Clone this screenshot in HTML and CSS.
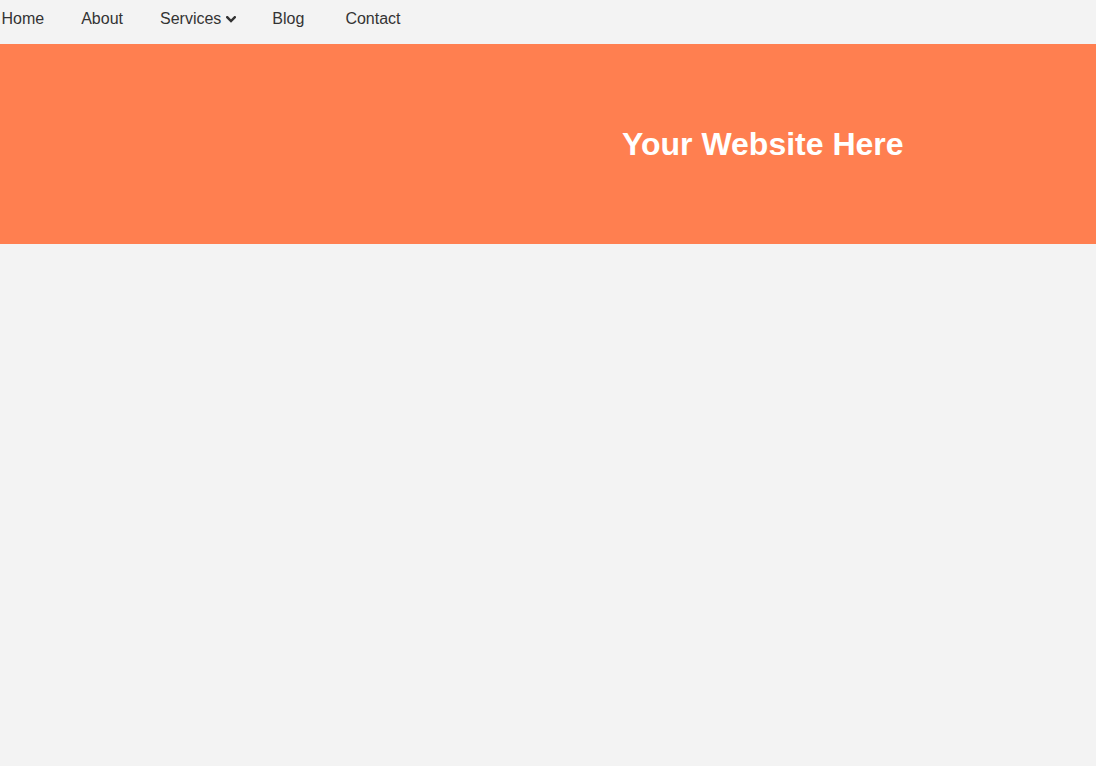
FILE: index.html
```html
<!DOCTYPE html>
<html lang="en">
<head>
<meta charset="utf-8">
<title>Your Website Here</title>
<link rel="stylesheet" href="styles.css">
</head>
<body>
<nav class="nav">
  <ul class="nav-list">
    <li class="nav-item"><a href="#" class="nav-link">Home</a></li>
    <li class="nav-item"><a href="#" class="nav-link">About</a></li>
    <li class="nav-item"><a href="#" class="nav-link">Services<svg class="chev" width="10" height="7" viewBox="0 0 10 7"><path d="M1.2 1.2 L5 5 L8.8 1.2" fill="none" stroke="#333" stroke-width="2.4" stroke-linecap="square"/></svg></a></li>
    <li class="nav-item nav-item-blog"><a href="#" class="nav-link">Blog</a></li>
    <li class="nav-item nav-item-last"><a href="#" class="nav-link">Contact</a></li>
  </ul>
</nav>
<header class="hero">
  <h1 class="hero-title">Your Website Here</h1>
</header>
</body>
</html>
```
FILE: styles.css
```css
html, body {
  margin: 0;
  padding: 0;
  background: #f3f3f3;
  font-family: Arial, "Liberation Sans", sans-serif;
}

.nav {
  height: 44px;
  box-sizing: border-box;
  padding: 10px 0 0 1.5px;
}

.nav-list {
  list-style: none;
  margin: 0;
  padding: 0;
  display: flex;
  gap: 37px;
}

.nav-item-blog {
  margin-left: -1px;
}

.nav-item-last {
  margin-left: 4px;
}

.nav-link {
  display: flex;
  align-items: center;
  font-size: 16px;
  line-height: 18px;
  color: #333;
  text-decoration: none;
}

.chev {
  margin-left: 5px;
  margin-top: 1px;
}

.hero {
  background: #ff7f50;
  height: 200px;
  box-sizing: border-box;
  padding: 82px 0 0 622px;
}

.hero-title {
  margin: 0;
  color: #fff;
  font-size: 32px;
  font-weight: bold;
  line-height: 37px;
}
```
